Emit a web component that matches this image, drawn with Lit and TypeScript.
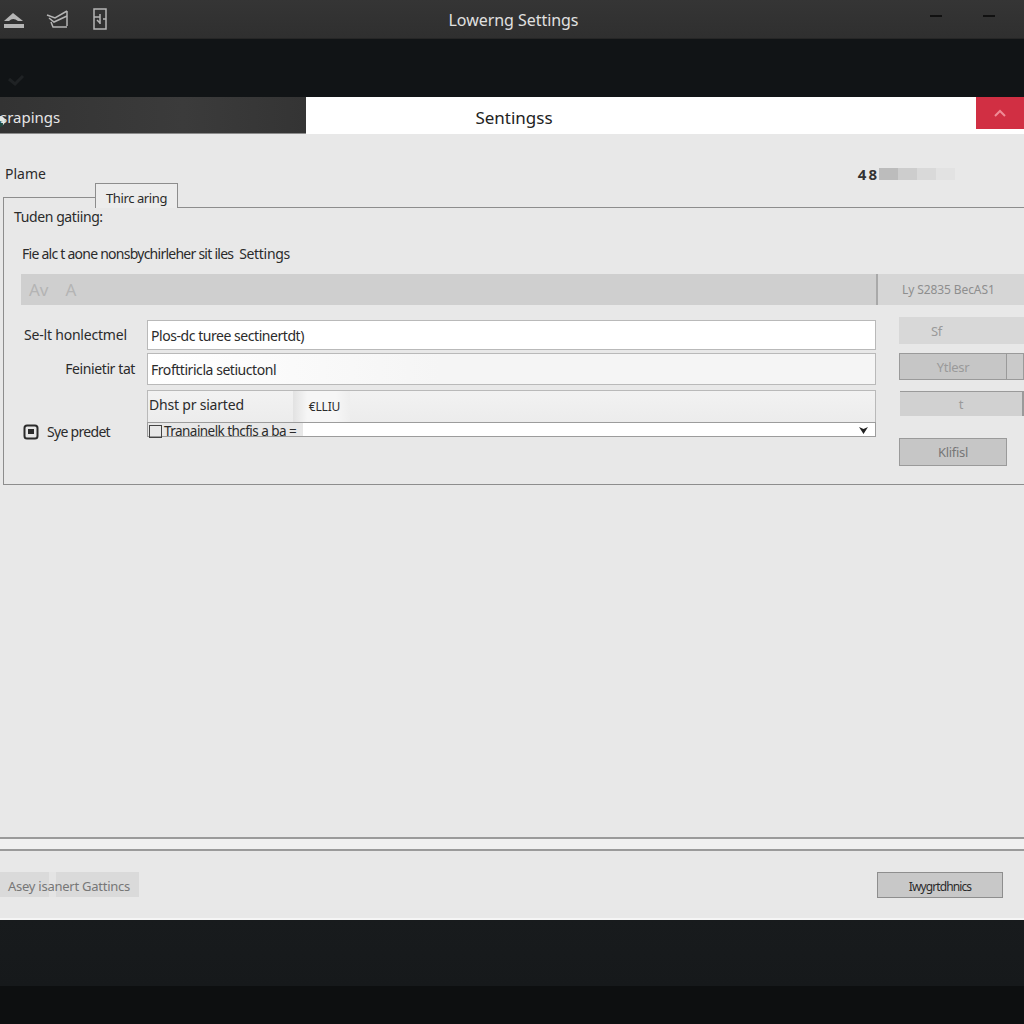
import { LitElement, html, css } from "lit";
import { customElement } from "lit/decorators.js";

@customElement("app-root")
export class AppRoot extends LitElement {
  static styles = css`
    :host { display: block; width: 1024px; height: 1024px; overflow: hidden; font-family: "Noto Sans", "Liberation Sans", sans-serif; font-size: 14px; color: #2b2b2b; background: #15181a; }
    * { box-sizing: border-box; }
    .app { display: flex; flex-direction: column; height: 1024px; }
    .titlebar { height: 39px; background: linear-gradient(#353535, #2f2f2f); border-bottom: 1px solid #262626; display: grid; grid-template-columns: 1fr auto 1fr; align-items: center; flex: none; }
    .tools { display: flex; align-items: center; padding-left: 3px; }
    .tools svg { display: block; fill: none; stroke: #b5b5b5; }
    .tools .i2 { margin-left: 22px; }
    .tools .i3 { margin-left: 25px; }
    .title { color: #e0e0e0; font-size: 16px; padding: 1px 0 0 3px; letter-spacing: -0.05px; }
    .wins { display: flex; justify-content: flex-end; gap: 41px; padding: 0 29px 6px 0; }
    .wins i { display: block; width: 12px; height: 2px; background: #111; }
    .dark { height: 58px; background: #111416; flex: none; padding: 36px 0 0 7px; }
    .dark svg { display: block; fill: none; stroke: #1f2224; stroke-width: 3; }
    .header { height: 37px; display: grid; grid-template-columns: 306px 1fr 48px; flex: none; background: #fff; }
    .hleft { background: linear-gradient(90deg, #333 0%, #3b3b3b 60%, #343434 100%); color: #e6e6e6; font-size: 15px; display: flex; align-items: center; height: 37px; padding-top: 3px; box-shadow: inset 0 -1px 0 #8b8b8b; }
    .hleft svg { display: block; flex: none; width: 6px; height: 12px; margin: 8px -6px 0 0; }
    .hcenter { display: flex; justify-content: center; align-items: center; font-size: 17px; color: #222; padding: 3px 254px 0 0; }
    .close { height: 32px; background: #d12f43; display: flex; align-items: center; justify-content: center; }
    .close svg { display: block; fill: none; stroke: #ef8b96; stroke-width: 2; }
    .content { flex: 1; min-height: 0; background: #e8e8e8; display: flex; flex-direction: column; }
    .plane { height: 49px; padding: 31px 69px 0 5px; display: flex; justify-content: space-between; align-items: flex-start; }
    .plane span { line-height: 18px; }
    .meter { display: flex; align-items: center; height: 12px; margin-top: 3px; font-size: 15px; font-weight: 700; color: #333; letter-spacing: 2px; gap: 1px; }
    .meter i { display: block; width: 19px; height: 12px; margin-left: -1px; }
    .strip { display: flex; height: 25px; margin-left: 3px; flex: none; }
    .sl { width: 92px; height: 11px; margin-top: 14px; border-top: 1px solid #8d8d8d; border-left: 1px solid #8d8d8d; }
    .tab { width: 83px; border: 1px solid #8d8d8d; border-bottom: 0; font-size: 13px; text-align: center; line-height: 28px; letter-spacing: -0.4px; background: #ececec; }
    .sr { flex: 1; border-bottom: 1px solid #8d8d8d; }
    .panel { margin-left: 3px; height: 277px; border-left: 1px solid #8d8d8d; border-bottom: 1px solid #8d8d8d; padding-left: 10px; flex: none; }
    .hd { height: 18px; line-height: 18px; letter-spacing: -0.4px; }
    .note { height: 18px; line-height: 18px; margin: 19px 0 11px 8px; letter-spacing: -0.75px; }
    .note span { letter-spacing: -0.3px; margin-left: 3px; }
    .bar { margin-left: 7px; height: 31px; display: grid; grid-template-columns: 855px 1fr; background: #cfcfcf; color: #b4b4b4; }
    .bar span { display: flex; align-items: center; padding-left: 8px; font-size: 17px; gap: 17px; }
    .bar .rc { border-left: 2px solid #a9a9a9; background: #d6d6d6; color: #8e8e8e; font-size: 12px; padding-left: 24px; letter-spacing: -0.1px; }
    .grid { margin: 12px 0 0 7px; display: grid; grid-template-columns: 855px 1fr; column-gap: 23px; }
    .form { padding-top: 3px; display: flex; flex-direction: column; }
    .row { display: grid; grid-template-columns: 126px 1fr; }
    .row label { display: flex; align-items: center; line-height: 18px; padding-left: 3px; letter-spacing: -0.2px; }
    .row label.right { justify-content: flex-end; padding: 0 12px 0 0; letter-spacing: -0.4px; }
    .fld { border: 1px solid #b9b9b9; display: flex; align-items: center; padding-left: 3px; letter-spacing: -0.45px; }
    .r1 { height: 30px; }
    .r1 .fld { background: #fff; }
    .r2 { height: 32px; margin-top: 3px; }
    .r2 .fld { background: linear-gradient(90deg, #fff, #f5f5f5 40%); }
    .r3 { height: 32px; margin-top: 5px; }
    .r3 .fld { background: linear-gradient(#f2f2f2, #ececec); padding: 0 0 4px 1px; border-bottom: 0; letter-spacing: -0.2px; }
    .r3 .val { margin: 0 0 -4px 49px; align-self: stretch; display: flex; align-items: center; font-size: 12px; padding: 0 10px 0 16px; background: linear-gradient(90deg, #e2e2e2, #f6f6f6 25%, #f6f6f6 75%, #eeeeee); }
    .r4 { height: 15px; grid-template-rows: 15px; }
    .r4 label { gap: 8px; padding-left: 2px; margin-top: 2px; height: 15px; letter-spacing: -0.7px; }
    .r4 label span { letter-spacing: -0.7px; }
    .r4 svg { display: block; flex: none; fill: none; stroke: #2b2b2b; stroke-width: 2; }
    .r4 .fld { background: linear-gradient(90deg, #e8e8e8 0, #e8e8e8 155px, #fff 155px); padding: 0 7px 0 1px; justify-content: space-between; border-color: #9c9c9c; white-space: nowrap; letter-spacing: -0.55px; line-height: 13px; font-size: 13.5px; }
    .r4 .fld > span { position: relative; top: 2px; }
    .r4 .fld svg { fill: #222; stroke: none; }
    .r4 .cb { display: inline-block; width: 13px; height: 13px; border: 1px solid #444; margin-right: 2px; vertical-align: -2px; }
    .side { display: flex; flex-direction: column; color: #9a9a9a; font-size: 13px; letter-spacing: -0.3px; }
    .bt { display: flex; }
    .bt span { display: flex; align-items: center; justify-content: center; background: #d1d1d1; }
    .b1 { height: 27px; }
    .b1 span { width: 125px; background: #d8d8d8; padding-right: 50px; }
    .b2 { height: 27px; margin-top: 9px; }
    .b2 span { width: 108px; border: 1px solid #9a9a9a; background: #c6c6c6; }
    .b2 b { display: block; flex: 1; background: #cacaca; border: 1px solid #9a9a9a; border-left: 0; }
    .b3 { height: 25px; margin: 11px 0 0 1px; }
    .b3 span { width: 122px; border-top: 1px solid #9a9a9a; }
    .b3 b { display: block; flex: 1; border-left: 2px solid #9a9a9a; background: #d1d1d1; }
    .b4 { height: 28px; margin-top: 22px; }
    .b4 span { width: 108px; border: 1px solid #9a9a9a; background: #c6c6c6; color: #777; }
    .fill { flex: 1; min-height: 0; }
    .lines { height: 14px; border-top: 2px solid #9a9a9a; border-bottom: 2px solid #9a9a9a; background: #f0f0f0; flex: none; }
    .foot { height: 69px; flex: none; padding: 21px 21px 0 0; display: flex; justify-content: space-between; align-items: flex-start; border-bottom: 2px solid #f5f5f5; }
    .fl { width: 139px; height: 25px; background: linear-gradient(90deg, #dadada 0 49px, #e4e4e4 49px 56px, #dadada 56px); color: #777; font-size: 13px; display: flex; align-items: center; padding: 2px 0 0 8px; letter-spacing: -0.25px; white-space: nowrap; }
    .fr { width: 126px; height: 26px; background: #c8c8c8; border: 1px solid #8e8e8e; display: flex; align-items: center; justify-content: center; font-size: 12px; letter-spacing: -0.9px; padding-top: 2px; }
    .bottom { flex: none; height: 104px; background: linear-gradient(#181b1d 0, #16191b 63%, #0d0f10 63%, #0d0f10 100%); }
  `;

  render() {
    return html`<div class="app">
      <div class="titlebar">
        <div class="tools">
          <svg width="21" height="22" viewBox="0 0 21 22"><path d="M1 13 L10 5 L20 13 H15 Q10 9 6 13 Z" fill="#b5b5b5" stroke="none"/><path d="M1 18H21" stroke-width="4"/></svg>
          <svg class="i2" width="22" height="22" viewBox="0 0 22 22" stroke-width="1.5"><path d="M1 7 L9 10 L21 3 M3 10 L8 14 L21 8 M5 14 L7 19 H21 M21 3 V18"/></svg>
          <svg class="i3" width="14" height="22" viewBox="0 0 14 22" stroke-width="1.5"><path d="M1 1H13V21H1Z M1 9H7 M7 16V6 M4 12L7 15 M10 11H13"/></svg>
        </div>
        <div class="title">Lowerng Settings</div>
        <div class="wins"><i></i><i></i></div>
      </div>
      <div class="dark"><svg width="18" height="12" viewBox="0 0 18 12"><path d="M2 4L8 9L16 1"/></svg></div>
      <div class="header">
        <div class="hleft"><svg viewBox="0 0 6 12"><circle cx="0" cy="6" r="5" fill="#dfe8e4"/><circle cx="0" cy="9" r="3" fill="#1f4a40"/></svg>srapings</div>
        <div class="hcenter">Sentingss</div>
        <div class="close"><svg width="14" height="8" viewBox="0 0 14 8"><path d="M2 7L7 2L12 7"/></svg></div>
      </div>
      <div class="content">
        <div class="plane">
          <span>Plame</span>
          <div class="meter">48<i style="background:#bcbcbc"></i><i style="background:#cdcdcd"></i><i style="background:#d9d9d9"></i><i style="background:#e2e2e2"></i></div>
        </div>
        <div class="strip"><div class="sl"></div><div class="tab">Thirc aring</div><div class="sr"></div></div>
        <div class="panel">
          <div class="hd">Tuden gatiing:</div>
          <div class="note">Fie alc t aone nonsbychirleher sit iles <span>Settings</span></div>
          <div class="bar"><span><span style="padding:0">Av</span><span style="padding:0">A</span></span><span class="rc">Ly S2835 BecAS1</span></div>
          <div class="grid">
            <div class="form">
              <div class="row r1"><label>Se-lt honlectmel</label><div class="fld">Plos-dc turee sectinertdt)</div></div>
              <div class="row r2"><label class="right">Feinietir tat</label><div class="fld">Frofttiricla setiuctonl</div></div>
              <div class="row r3"><label></label><div class="fld">Dhst pr siarted<span class="val">€LLIU</span></div></div>
              <div class="row r4">
                <label><svg width="16" height="16" viewBox="0 0 16 16"><rect x="1.5" y="1.5" width="13" height="13" rx="2.5"/><rect x="5" y="5" width="6" height="5" fill="#2b2b2b" stroke="none"/></svg><span>Sye predet</span></label>
                <div class="fld"><span><span class="cb"></span>Tranainelk thcfis a ba =</span><svg width="9" height="8" viewBox="0 0 9 8"><path d="M0 1L4.5 8L9 1L4.5 3Z"/></svg></div>
              </div>
            </div>
            <div class="side">
              <div class="bt b1"><span>Sf</span></div>
              <div class="bt b2"><span>Ytlesr</span><b></b></div>
              <div class="bt b3"><span>t</span><b></b></div>
              <div class="bt b4"><span>Klifisl</span></div>
            </div>
          </div>
        </div>
        <div class="fill"></div>
        <div class="lines"></div>
        <div class="foot">
          <div class="fl">Asey isanert Gattincs</div>
          <div class="fr">Iwygrtdhnics</div>
        </div>
      </div>
      <div class="bottom"></div>
    </div>`;
  }
}
